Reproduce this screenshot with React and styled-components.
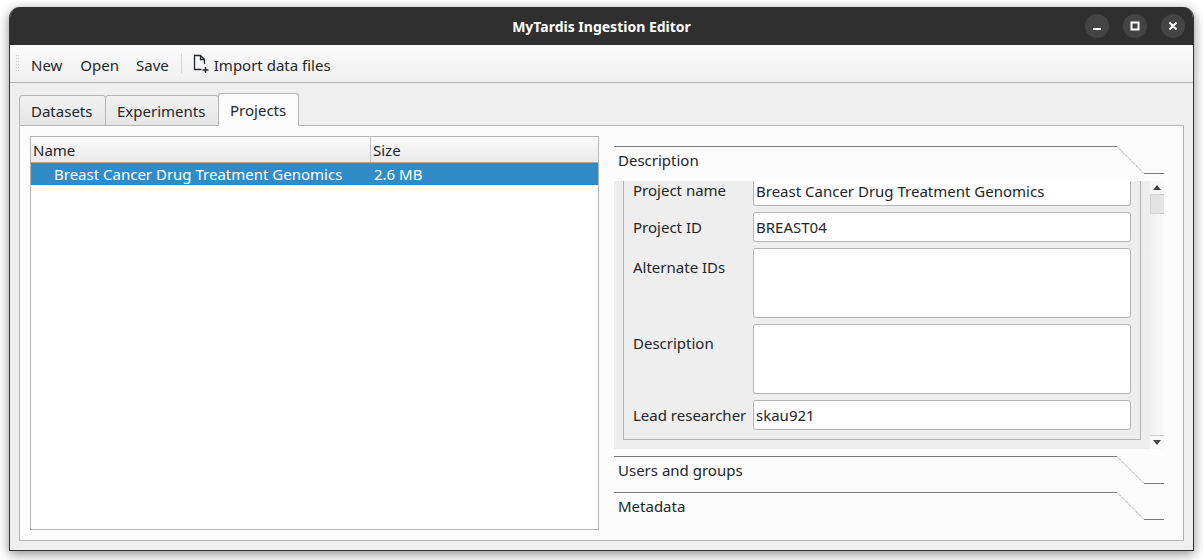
import React from "react";
import styled, { createGlobalStyle } from "styled-components";

const Global = createGlobalStyle`
  html, body { margin: 0; padding: 0; background: #fff; height: 560px; overflow: hidden; }
  body { font-family: "Noto Sans", "Open Sans", sans-serif; font-size: 15px; color: #232629; }
`;

const Desktop = styled.div`
  width: 1203px; height: 560px; box-sizing: border-box; padding: 7px 9px 9px 9px;
  background: #fff;
`;
const Win = styled.div`
  height: 544px; width: 1185px; box-sizing: border-box;
  display: flex; flex-direction: column;
  border-radius: 11px 11px 0 0; overflow: hidden;
  background: #efefef;
  border: 1px solid #333;
  border-top: 0;
  box-shadow: 0 3px 12px rgba(0,0,0,.45);
`;
const TitleBar = styled.div`
  height: 38px; flex: none; box-sizing: border-box; padding-top: 1px; background: #2f2f2f; color: #fff; position: relative;
  display: flex; align-items: center; justify-content: center;
  font-weight: 700; font-size: 14px;
`;
const TitleButtons = styled.div`
  position: absolute; right: 8px; top: 7px; display: flex; gap: 14px;
`;
const TitleBtn = styled.div`
  width: 24px; height: 24px; border-radius: 50%; background: #444;
  display: flex; align-items: center; justify-content: center;
`;
const Toolbar = styled.div`
  height: 38px; flex: none; box-sizing: border-box; display: flex; align-items: center;
  padding: 2px 0 0 5px; border-bottom: 1px solid #b4b4b4;
  background: linear-gradient(#fbfbfb, #efefef);
`;
const Grip = styled.div`
  width: 5px; height: 18px; margin-right: 11px; margin-top: -3px;
  background-image: radial-gradient(circle, #bbb 0.7px, transparent 0.8px);
  background-size: 2.5px 3px;
`;
const ToolItem = styled.span`
  margin-right: ${p => p.$mr || 17}px; line-height: 20px;
`;
const Sep = styled.div`
  width: 1px; height: 19px; background: #d4d4d4; margin: -2px 11px 0 -5px;
`;
const ImportBtn = styled.div`
  display: flex; align-items: center; gap: 3px;
`;
const ImportIcon = styled.svg`
  width: 18px; height: 20px; flex: none; margin-top: -2px;
`;
const Body = styled.div`
  flex: 1; padding: 10px 9px 9px 9px; display: flex; flex-direction: column; min-height: 0;
`;
const TabBar = styled.div`
  display: flex; height: 33px; align-items: flex-end; flex: none; position: relative; z-index: 1; margin-bottom: -1px;
`;
const Tab = styled.div`
  box-sizing: border-box; height: ${p => p.$active ? 33 : 31}px; width: ${p => p.$w}px;
  padding-left: 11px;
  padding-top: ${p => p.$active ? 6 : 5}px;
  border: 1px solid #b4b4b4;
  border-radius: 3px 3px 0 0;
  margin-right: -1px;
  background: ${p => p.$active ? "#fcfcfc" : "linear-gradient(#f1f1f1,#e6e6e6)"};
  border-bottom: ${p => p.$active ? "1px solid #fcfcfc" : "1px solid #b4b4b4"};
  line-height: 20px;
`;
const Pane = styled.div`
  flex: 1; min-height: 0; box-sizing: border-box; border: 1px solid #b4b4b4; background: #fcfcfc;
  padding: 10px 19px 10px 10px; display: flex; gap: 15px;
`;
const Tree = styled.div`
  width: 569px; flex: none; box-sizing: border-box; border: 1px solid #b4b4b4; background: #fff;
`;
const HeaderRow = styled.div`
  height: 26px; box-sizing: border-box; display: flex; border-bottom: 1px solid #aaa;
  background: linear-gradient(#fcfcfc, #e9e9e9); align-items: flex-end;
`;
const HeaderCell = styled.div`
  box-sizing: border-box; width: ${p => p.$w}px; height: 25px; padding: 3px 0 0 2px;
  border-right: ${p => p.$last ? "0" : "1px solid #c4c4c4"}; line-height: 20px;
`;
const SelRow = styled.div`
  height: 22px; display: flex; background: #308cc6; color: #fff; line-height: 23px;
`;
const SelCell = styled.div`
  box-sizing: border-box; width: ${p => p.$w}px; padding-left: ${p => p.$pl}px; white-space: nowrap;
`;
const Toolbox = styled.div`
  width: 550px; flex: none; display: flex; flex-direction: column; padding-top: 10px;
`;
const SectionHead = styled.div`
  position: relative; height: 28px; flex: none; box-sizing: border-box; padding: 3px 0 0 4px; line-height: 22px;
`;
const HeadLine = styled.svg`
  position: absolute; left: 0; top: 0; width: 550px; height: 28px; pointer-events: none;
`;
const SectionBody = styled.div`
  height: 268px; margin-top: 7px; margin-bottom: 7px; display: flex; background: #eee; flex: none;
`;
const ScrollView = styled.div`
  width: 536px; flex: none; overflow: hidden; padding-left: 9px; box-sizing: border-box;
`;
const Group = styled.div`
  width: 518px; box-sizing: border-box; height: 259px; border: 1px solid #b4b4b4; border-top: 0;
  display: grid; grid-template-columns: 120px 378px; row-gap: 6px; padding: 0 0 9px 9px; align-content: end;
`;
const Label = styled.div`
  line-height: ${p => p.$lh || 20}px; padding-top: ${p => p.$pt ?? 5}px; white-space: nowrap;
`;
const Input = styled.div`
  box-sizing: border-box; height: ${p => p.$h}px; background: #fff; border: 1px solid #b4b4b4; border-radius: 3px;
  padding: 0 2px; line-height: ${p => p.$h - 2}px; white-space: nowrap; overflow: hidden;
  ${p => p.$clip ? "border-top: 0; border-radius: 0 0 3px 3px; line-height: 20px;" : ""}
`;
const Scrollbar = styled.div`
  width: 14px; flex: none; display: flex; flex-direction: column; background: linear-gradient(90deg,#f0f0f0,#fafafa);
`;
const Arrow = styled.div`
  height: ${p => p.$down ? 14 : 13}px; flex: none; display: flex; align-items: center; justify-content: center; background: #f8f8f8; box-sizing: border-box;
  ${p => p.$down ? "border-top: 1px solid #ccc;" : ""}
`;
const Thumb = styled.div`
  height: 20px; flex: none; background: #e3e3e3; border: 1px solid #d2d2d2; border-right: 0; box-sizing: border-box;
`;
const Track = styled.div`flex: 1;`;
const SectionGap = styled.div`height: 8px; flex: none;`;

const Head = ({ children }) => (
  <SectionHead>
    <HeadLine viewBox="0 0 550 28">
      <path d="M0 .5H503" stroke="#7a7a7a" fill="none" />
      <path d="M503 .5L530 27.5" stroke="#7a7a7a" strokeDasharray="1 1" fill="none" />
      <path d="M530 27.5H550" stroke="#7a7a7a" fill="none" />
    </HeadLine>
    {children}
  </SectionHead>
);

export default function App() {
  return (
    <>
      <Global />
      <Desktop>
        <Win>
          <TitleBar>
            MyTardis Ingestion Editor
            <TitleButtons>
              <TitleBtn>
                <svg width="10" height="10" viewBox="0 0 10 10"><rect x="1" y="7" width="8" height="2" fill="#fff" /></svg>
              </TitleBtn>
              <TitleBtn>
                <svg width="10" height="10" viewBox="0 0 10 10"><rect x="1.5" y="1.5" width="7" height="7" fill="none" stroke="#fff" strokeWidth="2" /></svg>
              </TitleBtn>
              <TitleBtn>
                <svg width="10" height="10" viewBox="0 0 10 10"><path d="M1.5 1.5L8.5 8.5M8.5 1.5L1.5 8.5" stroke="#fff" strokeWidth="2" /></svg>
              </TitleBtn>
            </TitleButtons>
          </TitleBar>
          <Toolbar>
            <Grip />
            <ToolItem $mr={18}>New</ToolItem>
            <ToolItem>Open</ToolItem>
            <ToolItem>Save</ToolItem>
            <Sep />
            <ImportBtn>
              <ImportIcon viewBox="0 0 18 20">
                <path d="M8.5 15.5H1.5V1.5H7.5L11.5 5.5V10M7.5 1.5V5.5H11.5" fill="none" stroke="#232629" strokeWidth="1.3" />
                <path d="M9.5 16H15.5M12.5 13V19" stroke="#232629" strokeWidth="1.5" />
              </ImportIcon>
              <span>Import data files</span>
            </ImportBtn>
          </Toolbar>
          <Body>
            <TabBar>
              <Tab $w={87}>Datasets</Tab>
              <Tab $w={114}>Experiments</Tab>
              <Tab $w={81} $active>Projects</Tab>
            </TabBar>
            <Pane>
              <Tree>
                <HeaderRow>
                  <HeaderCell $w={340}>Name</HeaderCell>
                  <HeaderCell $w={227} $last>Size</HeaderCell>
                </HeaderRow>
                <SelRow>
                  <SelCell $w={340} $pl={23}>Breast Cancer Drug Treatment Genomics</SelCell>
                  <SelCell $w={227} $pl={3}>2.6 MB</SelCell>
                </SelRow>
              </Tree>
              <Toolbox>
                <Head>Description</Head>
                <SectionBody>
                  <ScrollView>
                    <Group>
                      <Label $pt={0} $lh={18}>Project name</Label>
                      <Input $h={25} $clip>Breast Cancer Drug Treatment Genomics</Input>
                      <Label>Project ID</Label>
                      <Input $h={30}>BREAST04</Input>
                      <Label $pt={9}>Alternate IDs</Label>
                      <Input $h={70} />
                      <Label $pt={9}>Description</Label>
                      <Input $h={70} />
                      <Label>Lead researcher</Label>
                      <Input $h={30}>skau921</Input>
                    </Group>
                  </ScrollView>
                  <Scrollbar>
                    <Arrow>
                      <svg width="8" height="5" viewBox="0 0 8 5"><path d="M4 0L8 5H0Z" fill="#444" /></svg>
                    </Arrow>
                    <Thumb />
                    <Track />
                    <Arrow $down>
                      <svg width="8" height="5" viewBox="0 0 8 5"><path d="M4 5L8 0H0Z" fill="#444" /></svg>
                    </Arrow>
                  </Scrollbar>
                </SectionBody>
                <Head>Users and groups</Head>
                <SectionGap />
                <Head>Metadata</Head>
              </Toolbox>
            </Pane>
          </Body>
        </Win>
      </Desktop>
    </>
  );
}
